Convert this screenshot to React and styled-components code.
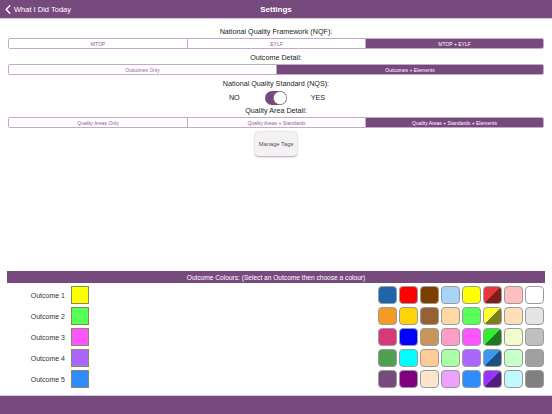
import React from "react";
import styled, { createGlobalStyle } from "styled-components";

const Global = createGlobalStyle`
  html, body { margin: 0; padding: 0; background: #fff; }
  body { font-family: "Liberation Sans", Arial, sans-serif; -webkit-font-smoothing: antialiased; }
  * { box-sizing: border-box; }
`;

const PURPLE = "#774a7e";

const Page = styled.div`
  width: 552px;
  height: 414px;
  display: flex;
  flex-direction: column;
  overflow: hidden;
`;

const NavBar = styled.div`
  height: 19px;
  background: ${PURPLE};
  border-bottom: 1px solid #d9c9dc;
  display: grid;
  grid-template-columns: 1fr auto 1fr;
  align-items: center;
  color: #fff;
  padding: 0 5px;
`;

const Back = styled.div`
  display: flex;
  align-items: center;
  gap: 3px;
  font-size: 7.5px;
`;

const Title = styled.div`
  font-size: 8px;
  font-weight: bold;
`;

const Top = styled.div`
  display: flex;
  flex-direction: column;
  align-items: center;
  padding: 7px 8px 0;
`;

const Heading = styled.div`
  font-size: 7.2px;
  line-height: 11px;
  color: #222;
  margin-top: ${(p) => p.$mt || 0}px;
  margin-bottom: ${(p) => p.$mb || 1}px;
`;

const Segmented = styled.div`
  width: 100%;
  height: 11px;
  display: grid;
  grid-template-columns: repeat(${(p) => p.$n}, 1fr);
  border: 1px solid #c9a6cd;
  border-radius: 2px;
  overflow: hidden;
`;

const Segment = styled.div`
  display: flex;
  align-items: center;
  justify-content: center;
  font-size: 5px;
  color: ${(p) => (p.$active ? "#fff" : "#8c5c93")};
  background: ${(p) => (p.$active ? PURPLE : "#fff")};
  border-left: ${(p) => (p.$first ? "none" : "1px solid #c9a6cd")};
`;

const ToggleRow = styled.div`
  display: flex;
  align-items: center;
  height: 15px;
  font-size: 7.2px;
  color: #222;
  padding-left: 2px;
`;

const Track = styled.div`
  width: 22px;
  height: 14px;
  border-radius: 7px;
  background: ${PURPLE};
  margin: 0 24px 0 25px;
  display: flex;
  justify-content: flex-end;
  align-items: center;
  padding: 1px;
`;

const Knob = styled.div`
  width: 12px;
  height: 12px;
  border-radius: 50%;
  background: #fff;
  box-shadow: 0 0 0 0.5px #ccc;
`;

const TagsButton = styled.div`
  margin-top: 4px;
  width: 42px;
  height: 24px;
  border-radius: 4px;
  background: #f3f1f3;
  box-shadow: 0 0.5px 2px rgba(0, 0, 0, 0.35);
  display: flex;
  align-items: center;
  justify-content: center;
  font-size: 5.8px;
  color: #5d4a62;
`;

const Spacer = styled.div`
  flex: 1;
`;

const ColoursBar = styled.div`
  margin: 0 7px;
  height: 12px;
  background: ${PURPLE};
  color: #fff;
  font-size: 6.6px;
  display: flex;
  align-items: center;
  justify-content: center;
`;

const ColoursArea = styled.div`
  display: flex;
  justify-content: space-between;
  padding: 3px 8px 7px 0;
`;

const Outcomes = styled.div`
  display: grid;
  grid-auto-rows: 18px;
  row-gap: 3px;
`;

const OutcomeRow = styled.div`
  display: grid;
  grid-template-columns: 65px 18px;
  column-gap: 6px;
  align-items: center;
`;

const OutcomeLabel = styled.div`
  text-align: right;
  font-size: 7px;
  color: #333;
`;

const OutcomeSwatch = styled.div`
  width: 18px;
  height: 18px;
  background: ${(p) => p.$c};
  border: 1px solid #8a8a5a;
`;

const Palette = styled.div`
  display: grid;
  grid-template-columns: repeat(8, 19px);
  grid-auto-rows: 18px;
  column-gap: 2px;
  row-gap: 3px;
`;

const Chip = styled.div`
  border-radius: 4px;
  border: 1px solid #9b9b9b;
  background: ${(p) => p.$bg};
`;

const Footer = styled.div`
  height: 19px;
  background: ${PURPLE};
  border-top: 1px solid #d9c9dc;
`;

const split = (a, b) => `linear-gradient(to bottom right, ${a} 50%, ${b} 50%)`;

const palette = [
  ["#1f66a8", "#ff0000", "#7b3f00", "#a6d5f7", "#ffff00", split("#ea3539", "#7b1e1e"), "#ffbfc0", "#ffffff"],
  ["#f39a27", "#ffd20a", "#976233", "#ffd9a3", "#59ff59", split("#ffff33", "#7d7d21"), "#ffdfb8", "#e4e4e4"],
  ["#d83a78", "#0000ff", "#c8955f", "#ff9dc8", "#ff55ff", split("#33ee33", "#1e7a1e"), "#effccc", "#bfbfbf"],
  ["#4f9f4f", "#00ffff", "#ffcc99", "#aaffa5", "#aa66ff", split("#3c98ee", "#1e4f80"), "#c8ffc8", "#a0a0a0"],
  ["#774a7e", "#800080", "#ffe4cc", "#eea0ff", "#2f8cff", split("#9933ff", "#4f1f80"), "#c0f8ff", "#808080"],
];

const outcomes = ["#ffff00", "#59ff59", "#ff55ff", "#aa66ff", "#2f8cff"];

function Seg({ items, active }) {
  return (
    <Segmented $n={items.length}>
      {items.map((t, i) => (
        <Segment key={t} $first={i === 0} $active={i === active}>
          {t}
        </Segment>
      ))}
    </Segmented>
  );
}

export default function App() {
  return (
    <Page>
      <Global />
      <NavBar>
        <Back>
          <svg width="6" height="9" viewBox="0 0 6 9">
            <path d="M4.8 0.8 L1.2 4.5 L4.8 8.2" fill="none" stroke="#fff" strokeWidth="1.4" strokeLinecap="round" strokeLinejoin="round" />
          </svg>
          What I Did Today
        </Back>
        <Title>Settings</Title>
        <div />
      </NavBar>
      <Top>
        <Heading>National Quality Framework (NQF):</Heading>
        <Seg items={["MTOP", "EYLF", "MTOP + EYLF"]} active={2} />
        <Heading $mt={3}>Outcome Detail:</Heading>
        <Seg items={["Outcomes Only", "Outcomes + Elements"]} active={1} />
        <Heading $mt={3} $mb={0}>National Quality Standard (NQS):</Heading>
        <ToggleRow>
          NO
          <Track>
            <Knob />
          </Track>
          YES
        </ToggleRow>
        <Heading $mt={0} $mb={1}>Quality Area Detail:</Heading>
        <Seg items={["Quality Areas Only", "Quality Areas + Standards", "Quality Areas + Standards + Elements"]} active={2} />
        <TagsButton>Manage Tags</TagsButton>
      </Top>
      <Spacer />
      <ColoursBar>Outcome Colours: (Select an Outcome then choose a colour)</ColoursBar>
      <ColoursArea>
        <Outcomes>
          {outcomes.map((c, i) => (
            <OutcomeRow key={i}>
              <OutcomeLabel>Outcome {i + 1}</OutcomeLabel>
              <OutcomeSwatch $c={c} />
            </OutcomeRow>
          ))}
        </Outcomes>
        <Palette>
          {palette.flat().map((c, i) => (
            <Chip key={i} $bg={c} />
          ))}
        </Palette>
      </ColoursArea>
      <Footer />
    </Page>
  );
}
